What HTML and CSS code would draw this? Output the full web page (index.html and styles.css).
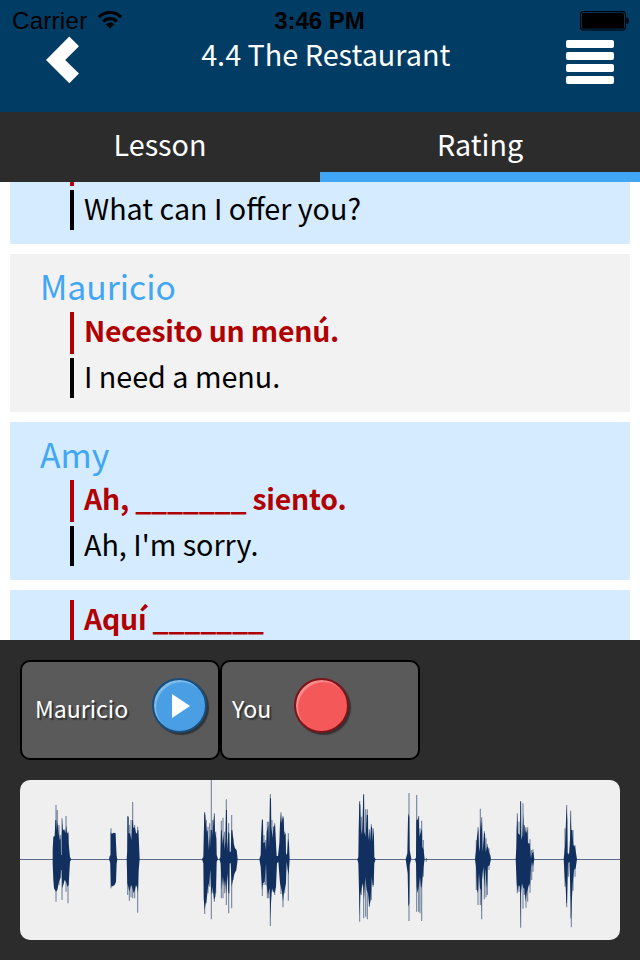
FILE: index.html
```html
<!DOCTYPE html>
<html lang="en">
<head>
<meta charset="utf-8">
<title>4.4 The Restaurant</title>
<link rel="stylesheet" href="styles.css">
</head>
<body>
<div class="app">
  <header class="header">
    <div class="status">
      <div class="carrier"><span>Carrier</span>
        <svg class="wifi" width="26" height="19" viewBox="0 0 26 19"><path d="M1.8 7.2a15.7 15.7 0 0 1 22.4 0M6.2 11.4a9.5 9.5 0 0 1 13.6 0" fill="none" stroke="#000" stroke-width="3.2"/><path d="M13 18.5l-4.3-4.3a6 6 0 0 1 8.6 0z"/></svg>
      </div>
      <time class="clock">3:46 PM</time>
      <svg class="battery" width="50" height="20" viewBox="0 0 50 20"><rect x=".6" y=".6" width="44.8" height="18.4" rx="2.5" fill="none" stroke="#000" stroke-width="1.1"/><rect x="2" y="2" width="42" height="15.7" rx="1.5"/><path d="M46.3 6.3q2.6.5 2.6 3.5t-2.6 3.5z"/></svg>
    </div>
    <div class="navbar">
      <svg class="back" width="34" height="48" viewBox="0 0 34 48"><path d="M0 24L23.3.5 33 10.2 19.2 24 33 37.6 23.3 47.3z" fill="#fff"/></svg>
      <h1 class="title">4.4 The Restaurant</h1>
      <div class="menu"><i></i><i></i><i></i><i></i></div>
    </div>
  </header>
  <nav class="tabs">
    <div class="tab">Lesson</div>
    <div class="tab tab-active">Rating</div>
  </nav>
  <main class="dialogue">
    <section class="card card-blue card-cut">
      <p class="line target"></p>
      <p class="line native">What can I offer you?</p>
    </section>
    <section class="card">
      <h2 class="name">Mauricio</h2>
      <p class="line target">Necesito un menú.</p>
      <p class="line native">I need a menu.</p>
    </section>
    <section class="card card-blue">
      <h2 class="name">Amy</h2>
      <p class="line target">Ah, _______ siento.</p>
      <p class="line native">Ah, I'm sorry.</p>
    </section>
    <section class="card card-blue">
      <p class="line target">Aquí _______</p>
    </section>
  </main>
  <footer class="panel">
    <div class="speakers">
      <div class="speaker"><span class="who">Mauricio</span><span class="round play"><svg width="18" height="24" viewBox="0 0 18 24"><path d="M0 0l18 12L0 24z" fill="#fff"/></svg></span></div>
      <div class="speaker"><span class="who you">You</span><span class="round record"></span></div>
    </div>
    <svg class="wave" width="600" height="160" viewBox="0 0 600 160">
      <path d="M0 79.5h600" stroke="#5a6b8a" stroke-width="1"/>
      <g transform="translate(-10 -10) scale(.33333)">
        <path class="soft" d="M138 105V395M142 120V350M147 165V345M151 195V325M156 145V390M168 138V365M174 185V400M303 175V355M353 138V375M358 165V392M363 150V382M368 96V385M374 165V385M383 170V428"/>
        <path class="core" d="M128 268V240L130 200 134 198 136 150 139 150 140 180 143 155 146 190 149 210 152 205 153 255 155 255 155 200 158 150 159 180 163 178 166 190 169 165 171 190 175 190 176 220 180 262 184 268 180 275 178 310 176 345 172 350 168 335 164 330 160 345 157 355 155 300 153 300 151 325 147 335 142 360 138 365 132 355 130 330 128 280z
        M297 268L299 258 302 255 302 185 305 192 311 188 317 190 318 220 320 258 322 268 320 280 318 335 314 345 305 350 303 345 301 280z
        M350 268L352 240 353 140 356 140 356 190 360 190 364 210 367 150 369 150 370 175 373 170 376 178 378 190 381 190 383 180 385 180 387 220 389 268 386 300 384 370 382 355 378 345 375 360 371 370 366 350 363 345 358 365 355 350 352 340z"/>
      </g>
      <g transform="translate(160 -10) scale(.33333)">
        <path class="soft" d="M74 126V432M79 150V400M84 170V370M89 160V350M94 30V448M98 150V370M103 130V395M107 185V370M124 152V385M129 143V385M134 185V370M139 88V405M146 160V430M155 135V415M159 205V330M247 148V378M252 195V345M257 210V345M262 155V385M266 155V385M271 72V468M276 150V365M284 160V375M303 127V372M309 138V412M314 185V370M325 190V392"/>
        <path class="core" d="M66 268L70 260 71 205 73 127 76 135 78 165 80 185 83 180 86 240 88 195 90 235 92 180 96 180 97 200 100 155 103 130 105 185 109 205 110 255 114 267 110 275 108 350 106 380 102 390 98 350 94 375 91 300 87 340 84 350 81 380 78 395 74 420 71 385 70 280z
        M118 268L121 262 123 180 125 180 128 225 131 190 133 240 136 215 138 120 141 120 142 240 145 185 148 190 149 245 152 245 154 180 157 180 161 220 165 235 170 240 173 268 169 300 164 310 160 325 155 350 152 280 149 280 148 370 145 370 142 310 139 370 135 330 132 350 129 320 125 360 122 280z
        M238 268L242 255 243 205 246 150 249 150 250 220 254 215 258 240 260 185 265 165 267 230 270 85 273 85 274 170 278 205 280 170 285 165 288 220 290 258 294 258 298 220 300 160 303 130 305 160 308 142 311 145 313 195 317 190 318 250 321 255 324 205 327 220 329 268 326 315 323 300 320 275 318 340 315 355 312 365 309 395 306 365 300 340 295 275 291 280 288 350 284 370 280 365 276 355 273 400 271 450 269 355 264 375 260 345 258 280 254 335 249 340 246 360 242 290z"/>
      </g>
      <g transform="translate(320 -10) scale(.33333)">
        <path class="soft" d="M59 93V455M64 140V375M71 72V445M77 118V440M82 118V448M88 178V410M94 163V390M99 175V350M207 69V453M230 75V425M236 138V425M240 175V430M245 152V453M250 210V320M259 264V275"/>
        <path class="core" d="M52 268L55 262 56 180 58 95 61 105 63 180 66 195 70 75 72 75 73 185 77 200 80 135 84 135 85 210 88 180 90 215 93 170 96 170 98 215 100 175 102 200 103 262 107 268 103 280 101 345 98 345 95 320 92 390 88 410 84 370 80 360 76 320 72 390 69 340 65 355 61 375 59 440 57 360 55 280z
        M197 268L202 250 204 145 206 130 208 140 209 240 214 266 209 285 208 400 205 410 203 310z
        M225 268L228 262 229 150 232 150 236 140 238 200 243 185 246 175 247 230 251 240 254 268 250 295 246 345 243 355 240 320 236 350 233 370 230 350 228 280z"/>
      </g>
      <g transform="translate(440 -10) scale(.33333)">
        <path class="soft" d="M49 210V360M54 172V405M61 116V405M65 142V448M73 184V388M78 205V382M82 222V375M87 235V300M172 130V370M177 155V365M182 93V473M189 100V416M193 165V375M198 172V413M203 172V395M210 208V368M215 240V330M219 238V305M315 175V350M320 105V412M325 250V320M332 122V445M334 180V472M339 180V362M345 225V320"/>
        <path class="core" d="M45 268L48 240 51 200 55 175 57 230 59 245 61 150 63 180 66 145 68 245 72 190 75 190 77 245 81 230 84 230 88 250 91 255 93 268 89 285 83 290 81 355 79 340 76 295 73 355 70 290 66 330 65 430 63 355 60 360 57 310 54 370 51 360 48 290z
        M167 268L169 230 170 175 172 135 174 190 180 195 181 95 183 95 184 210 187 195 190 130 192 205 194 165 198 190 202 180 204 220 209 220 213 265 216 250 220 245 223 268 219 290 216 275 213 290 210 350 208 340 204 355 200 370 197 395 193 355 190 355 186 340 183 370 182 470 180 350 176 345 173 365 170 340z
        M311 268L315 230 318 150 320 110 322 150 323 250 327 255 330 210 332 125 334 180 337 180 340 225 345 230 349 255 351 268 347 295 342 300 338 345 335 400 334 450 331 355 328 275 324 280 321 400 319 400 317 350 314 320z"/>
      </g>
    </svg>
  </footer>
</div>
</body>
</html>
```
FILE: styles.css
```css
* { box-sizing: border-box; margin: 0; padding: 0; }
body { width: 640px; height: 960px; overflow: hidden; background: #fff; font-family: "Noto Sans CJK SC", "Noto Sans", sans-serif; font-weight: 400; }
.app { display: flex; flex-direction: column; height: 960px; }
.header { height: 112px; background: #003c64; flex: none; }
.status { display: grid; grid-template-columns: 1fr auto 1fr; align-items: center; height: 40px; padding: 1px 11px 0 12px; font-family: "Liberation Sans", sans-serif; font-size: 24px; line-height: 40px; color: #000; }
.carrier { display: flex; align-items: center; gap: 10px; letter-spacing: .3px; }
.wifi { margin-top: -4px; }
.clock { font-weight: 700; margin-right: 2px; }
.battery { justify-self: end; margin-right: -1px; }
.navbar { display: flex; justify-content: space-between; align-items: flex-start; padding: 0 26px 0 45.5px; height: 72px; }
.back { margin-top: -4px; }
.title { font-size: 28.8px; font-weight: 400; line-height: 28px; color: #fff; margin-left: 6px; }
.menu { display: flex; flex-direction: column; gap: 4px; }
.menu i { width: 48px; height: 8px; border-radius: 2px; background: #fff; }
.tabs { display: flex; height: 70px; flex: none; background: #2c2c2c; color: #fff; font-size: 28.7px; line-height: 64px; text-align: center; }
.tab { flex: 1; }
.tab-active { border-bottom: 10px solid #41a7f5; }
.dialogue { display: flex; flex-direction: column; gap: 10px; height: 458px; padding: 0 10px; overflow: hidden; flex: none; }
.card { flex: none; padding: 10px 30px 14px; background: #f2f2f2; }
.card-blue { background: #d5ebff; }
.card-cut { padding-top: 0; }
.card-cut .target { height: 4px; }
.name { height: 48px; font-size: 33.7px; line-height: 44px; font-weight: 400; color: #41a7f5; }
.line { margin-left: 30px; padding-left: 10px; border-left: 4px solid; font-size: 28.7px; line-height: 35px; white-space: nowrap; }
.target { height: 42px; margin-bottom: 4px; color: #b00000; font-size: 28.4px; font-weight: 600; letter-spacing: -.22px; }
.native { height: 40px; border-color: #000; color: #000; }
.panel { flex: 1; background: #2c2c2c; padding: 20px; }
.speakers { display: flex; }
.speaker { display: flex; width: 200px; height: 100px; padding: 16px 0 0 13px; background: #5a5a5a; border: 2px solid #000; border-radius: 10px; }
.who { width: 117px; font-size: 23.1px; line-height: 60px; color: #fff; text-shadow: 2px 2px 1px #333; }
.you { width: 62px; margin-left: -3px; }
.round { display: flex; align-items: center; width: 55px; height: 55px; padding-left: 18px; border-radius: 50%; }
.play { background: #4a9fe4; border: 2px solid #194d7b; box-shadow: inset 2px 2px 1px #85bdea, 2px 2px 1px #333; }
.record { background: #f55859; border: 2px solid #7b1519; box-shadow: inset 2px 2px 1px #f79090, 2px 2px 1px #333; }
.wave { display: block; margin-top: 20px; border-radius: 10px; background: #efefef; }
.soft { fill: none; stroke: #12305f; stroke-width: 3.4; opacity: .55; }
.core { fill: #12305f; }
```
